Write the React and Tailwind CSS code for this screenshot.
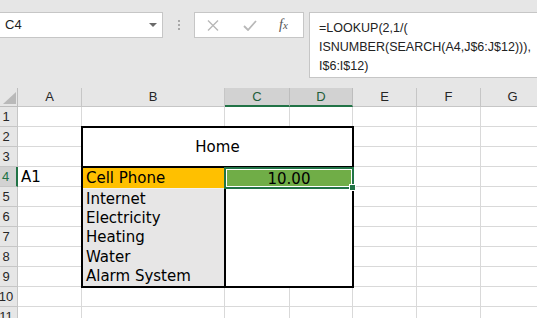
import React from 'react';

const cols = ['A', 'B', 'C', 'D', 'E', 'F', 'G'];
const rows = [1, 2, 3, 4, 5, 6, 7, 8, 9, 10, 11];
const items = ['Internet', 'Electricity', 'Heating', 'Water', 'Alarm System'];

const inTable = (r, c) => r >= 2 && r <= 9 && c >= 1 && c <= 3;

const FormulaBar = () => (
  <div className="h-[88px] bg-[#e6e6e6] pt-[12px] flex items-start font-['Liberation_Sans',sans-serif] text-[12px] text-[#222]">
    <div className="-ml-px w-[164px] h-[26px] bg-white border border-[#c6c6c6] flex items-center justify-between pl-[5px] pr-[5px]">
      <span className="text-[13px]">C4</span>
      <svg width="8" height="5" viewBox="0 0 8 5">
        <polygon points="0,0 8,0 4,4" fill="#6a6a6a" />
      </svg>
    </div>
    <div className="w-[31px] h-[26px] flex flex-col items-center justify-center gap-[2px]">
      <span className="w-[2px] h-[2px] bg-[#a8a8a8]" />
      <span className="w-[2px] h-[2px] bg-[#a8a8a8]" />
      <span className="w-[2px] h-[2px] bg-[#a8a8a8]" />
    </div>
    <div className="w-[110px] h-[26px] bg-white border border-[#c6c6c6] flex items-center pl-[12px]">
      <svg width="12" height="11" viewBox="0 0 12 11">
        <path d="M1 0.5 L11 10.5 M11 0.5 L1 10.5" stroke="#b8b8b8" strokeWidth="1.4" />
      </svg>
      <svg className="ml-[24px]" width="14" height="11" viewBox="0 0 14 11">
        <path d="M1 6 L5 10 L13 1" stroke="#b8b8b8" strokeWidth="1.8" fill="none" />
      </svg>
      <span className="ml-[22px] font-['Liberation_Serif',serif] italic text-[14px] text-[#555] leading-none">
        f<span className="text-[11px]">x</span>
      </span>
    </div>
    <div className="ml-[5px] flex-1 h-[66px] bg-white border border-[#c6c6c6] border-r-0 pl-[9px] pt-[6px] leading-[19px] text-[12.5px]">
      <div>=LOOKUP(2,1/(</div>
      <div>ISNUMBER(SEARCH(A4,J$6:J$12))),</div>
      <div>I$6:I$12)</div>
    </div>
  </div>
);

const App = () => {
  return (
    <div className="w-[537px] h-[318px] overflow-hidden bg-white">
      <FormulaBar />
      <div className="grid grid-cols-[18px_64px_143px_65px_63px_64px_64px_64px] grid-rows-[19px_repeat(11,20px)] font-['Liberation_Sans',sans-serif]">
        <div className="relative bg-[#e6e6e6] border-r border-b border-[#bdbdbd]">
          <svg className="absolute right-[1px] bottom-[2px]" width="13" height="12" viewBox="0 0 13 12">
            <polygon points="13,0 13,12 0,12" fill="#b9b9b9" />
          </svg>
        </div>
        {cols.map((c) => {
          const sel = c === 'C' || c === 'D';
          return (
            <div
              key={c}
              className={
                sel
                  ? 'flex items-center justify-center bg-[#d2d2d2] border-r border-r-[#bdbdbd] border-b-2 border-b-[#217346] text-[13px] text-[#1e5e3a]'
                  : 'flex items-center justify-center bg-[#e6e6e6] border-r border-b border-[#c6c6c6] text-[13px] text-[#262626]'
              }
            >
              {c}
            </div>
          );
        })}
        {rows.map((r) => (
          <React.Fragment key={r}>
            <div
              className={
                r === 4
                  ? 'flex items-center justify-center pr-[5px] bg-[#d2d2d2] border-r-2 border-r-[#217346] border-b border-b-[#c6c6c6] text-[13px] text-[#217346]'
                  : 'flex items-center justify-center pr-[5px] bg-[#e6e6e6] border-r border-b border-[#c6c6c6] text-[13px] text-[#262626]'
              }
            >
              {r}
            </div>
            {cols.map((c, ci) =>
              inTable(r, ci) ? null : (
                <div
                  key={c}
                  className="flex items-center pl-[3px] border-r border-b border-[#d9d9d9] bg-white font-['DejaVu_Sans',sans-serif] text-[15px] leading-[18px] text-black"
                >
                  {r === 4 && c === 'A' ? 'A1' : ''}
                </div>
              )
            )}
          </React.Fragment>
        ))}
        <div className="col-start-3 col-span-3 row-start-3 row-span-8 -m-px border-2 border-black bg-white grid grid-cols-[143px_1fr] grid-rows-[40px_21px_repeat(5,minmax(0,1fr))] font-['DejaVu_Sans',sans-serif] text-[15px] leading-[18px] text-black">
          <div className="col-span-2 border-b-2 border-black flex items-center justify-center">Home</div>
          <div className="bg-[#ffc000] border-r-2 border-r-black border-b border-b-[#f2f2f2] pl-[3px] flex items-center">Cell Phone</div>
          <div className="relative bg-[#70ad47] flex items-center justify-center">
            10.00
            <div className="absolute -left-[2px] -right-[2px] -top-px bottom-0 z-10 border-2 border-[#217346] shadow-[inset_0_0_0_1px_white]" />
            <div className="absolute -right-[4px] -bottom-[2px] z-20 w-[7px] h-[7px] bg-[#217346] border border-white" />
          </div>
          {items.map((t) => (
            <React.Fragment key={t}>
              <div className="bg-[#e7e6e6] border-r-2 border-black pl-[3px] flex items-center">{t}</div>
              <div />
            </React.Fragment>
          ))}
        </div>
      </div>
    </div>
  );
};

export default App;
